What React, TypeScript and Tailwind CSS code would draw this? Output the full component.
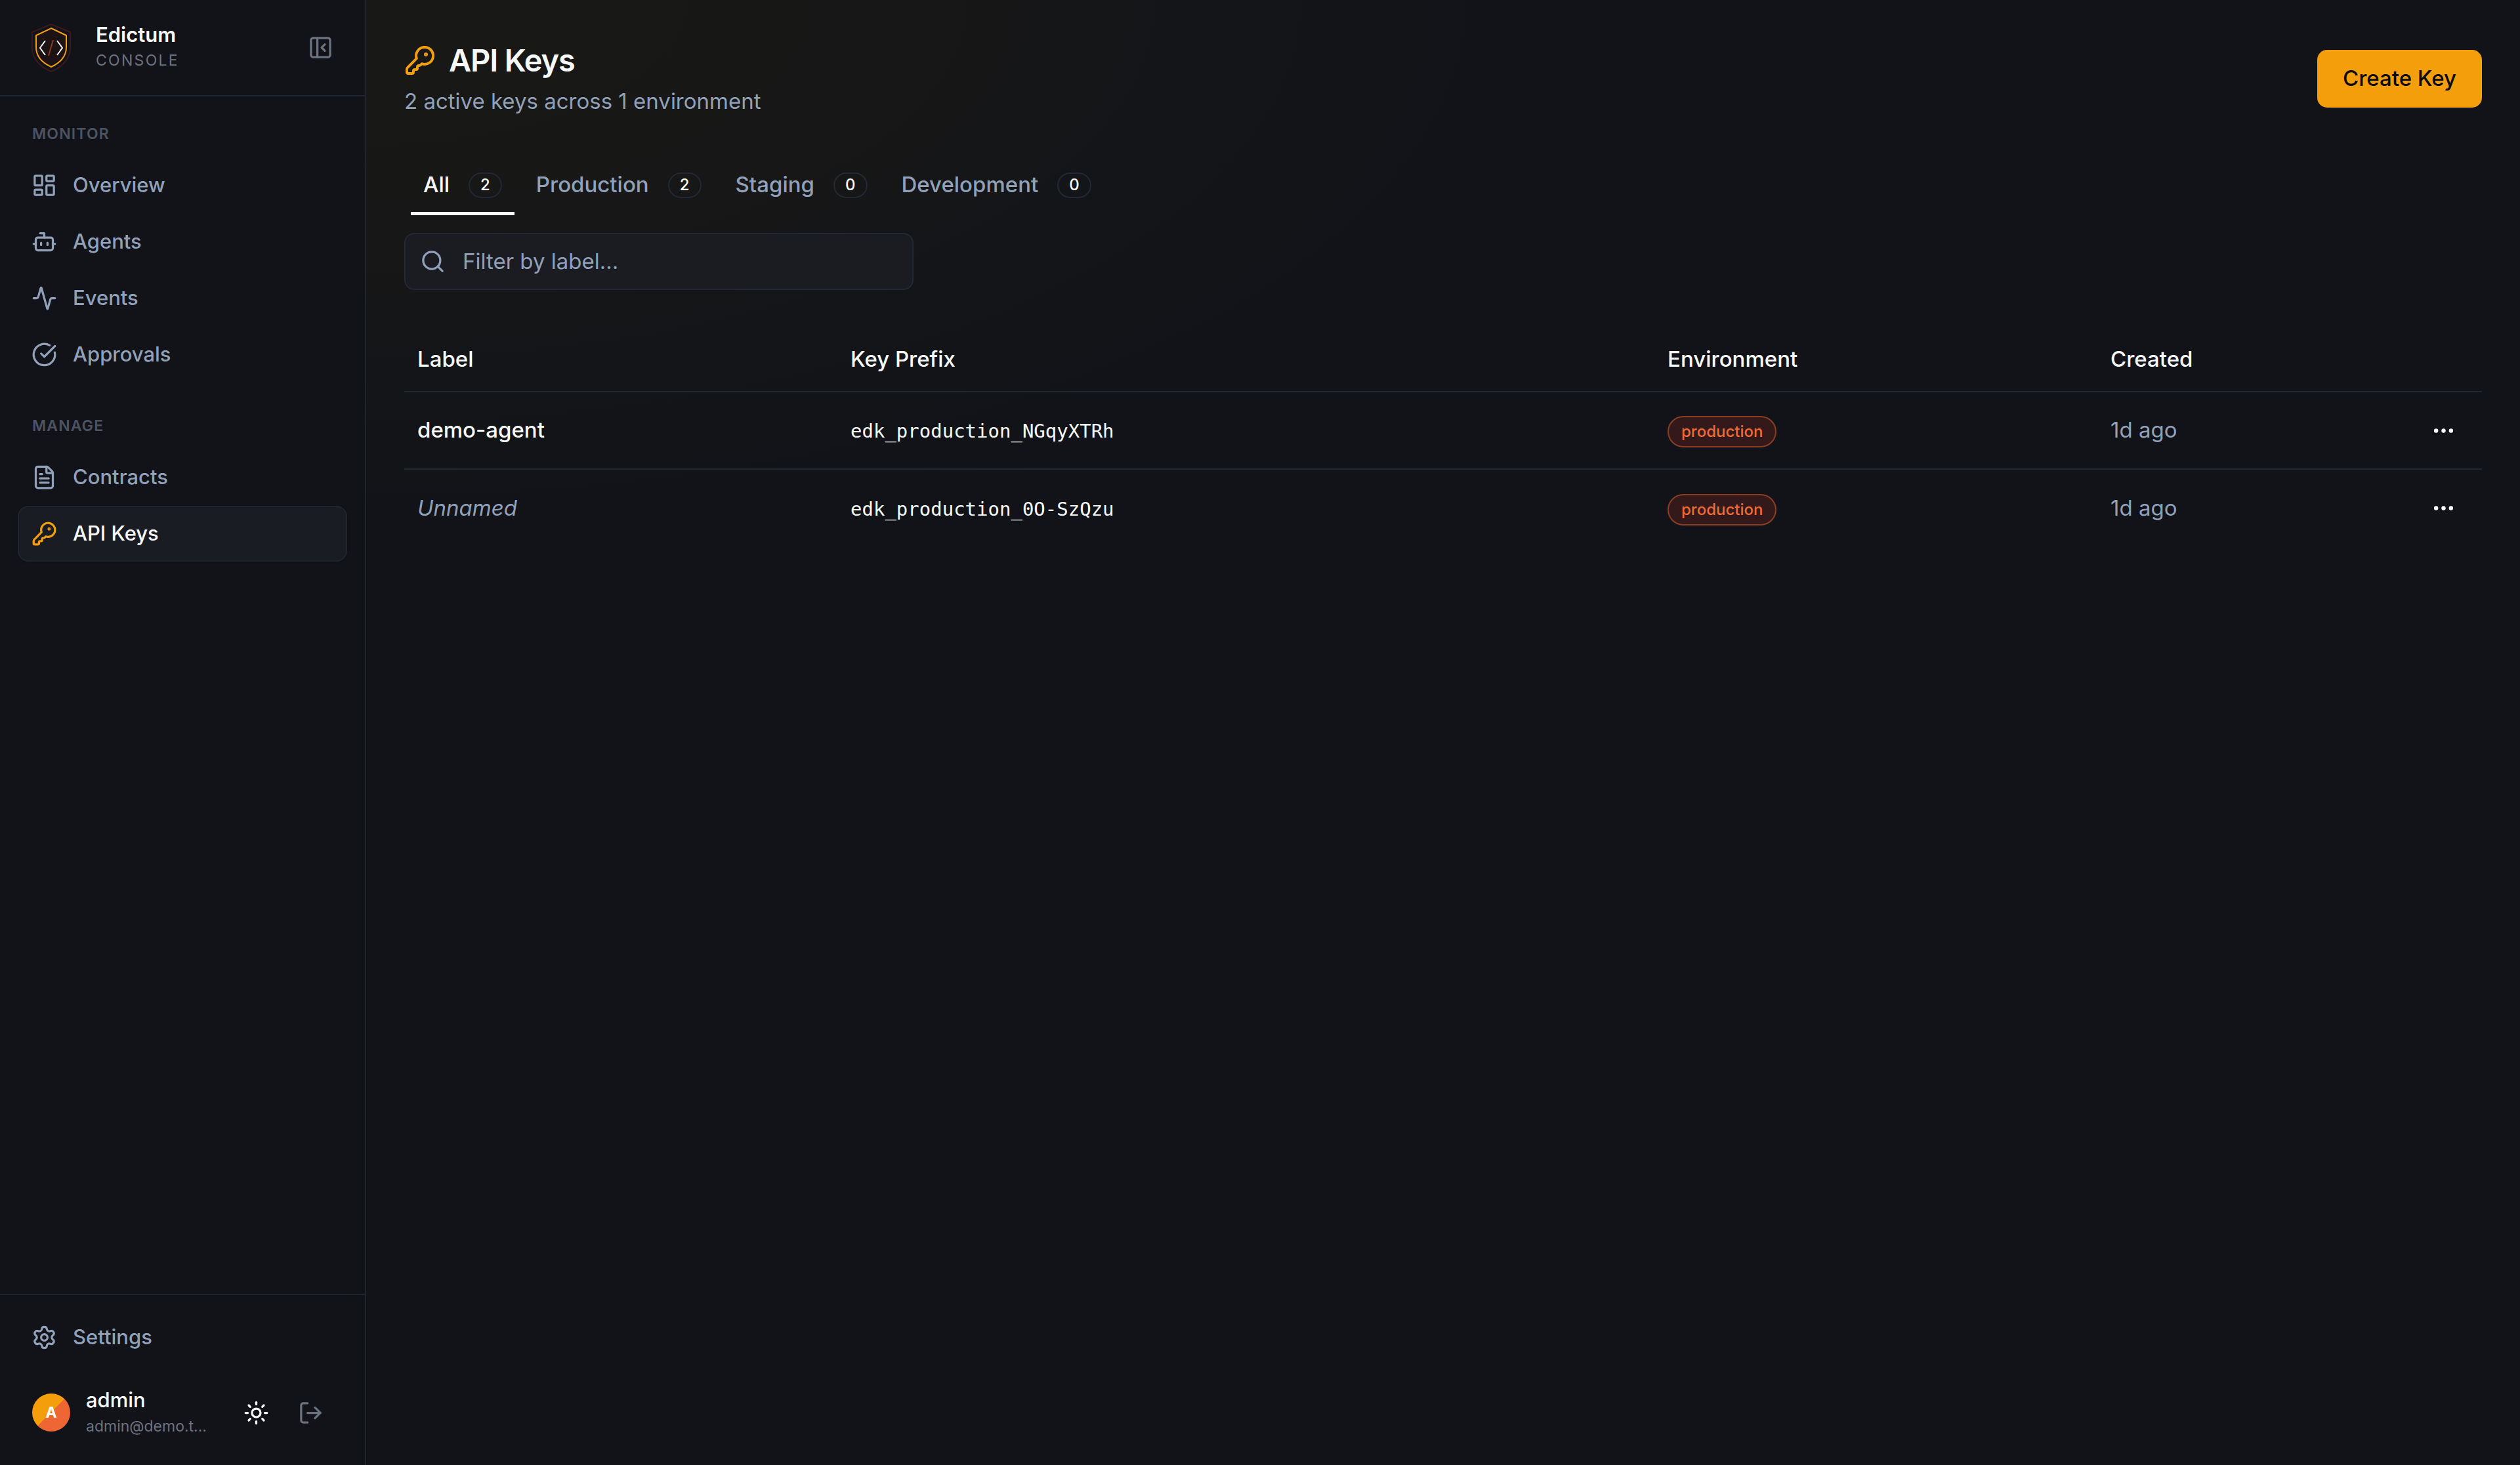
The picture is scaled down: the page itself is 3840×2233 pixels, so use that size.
import {
  Activity,
  Bot,
  CircleCheckBig,
  Ellipsis,
  FileText,
  KeyRound,
  LayoutDashboard,
  LogOut,
  PanelLeftClose,
  Search,
  Settings,
  Sun,
  type LucideIcon,
} from "lucide-react";

interface NavItem {
  label: string;
  icon: LucideIcon;
  active?: boolean;
}

interface ApiKey {
  label: string | null;
  prefix: string;
  environment: string;
  created: string;
}

const MONITOR: NavItem[] = [
  { label: "Overview", icon: LayoutDashboard },
  { label: "Agents", icon: Bot },
  { label: "Events", icon: Activity },
  { label: "Approvals", icon: CircleCheckBig },
];

const MANAGE: NavItem[] = [
  { label: "Contracts", icon: FileText },
  { label: "API Keys", icon: KeyRound, active: true },
];

const TABS = [
  { label: "All", count: 2 },
  { label: "Production", count: 2 },
  { label: "Staging", count: 0 },
  { label: "Development", count: 0 },
];

const KEYS: ApiKey[] = [
  {
    label: "demo-agent",
    prefix: "edk_production_NGqyXTRh",
    environment: "production",
    created: "1d ago",
  },
  {
    label: null,
    prefix: "edk_production_0O-SzQzu",
    environment: "production",
    created: "1d ago",
  },
];

function ShieldLogo() {
  return (
    <svg viewBox="0 0 60 74" fill="none" aria-hidden className="h-[74px] w-[60px] shrink-0">
      <path
        d="M30 1 59 13V38C59 54 45 67 30 73 15 67 1 54 1 38V13Z"
        stroke="#3a1a1c"
        strokeWidth="2"
      />
      <path
        d="M30 7 53 18V36C53 50 43 60 30 66 17 60 7 50 7 36V18Z"
        fill="#1d1315"
        stroke="#f59e0b"
        strokeWidth="2"
      />
      <path d="M21 26 13 37 21 48M39 26 47 37 39 48" stroke="#f8fafc" strokeWidth="2" />
      <path d="M33 25 26 49" stroke="#8a3a20" strokeWidth="2" />
    </svg>
  );
}

function NavLink({ label, icon: Icon, active = false }: NavItem) {
  return (
    <a
      href="#"
      className={`flex h-[85px] items-center gap-6 rounded-2xl border-2 px-[19px] text-[31px] font-medium ${
        active
          ? "border-[#20242e] bg-[#1a1c24] text-slate-50 shadow-sm"
          : "border-transparent text-slate-400"
      }`}
    >
      <Icon className={`size-[39px] shrink-0 ${active ? "text-[#f59e0b]" : ""}`} />
      {label}
    </a>
  );
}

function NavSection({ title, items }: { title: string; items: NavItem[] }) {
  return (
    <section>
      <h2 className="mb-[21px] px-[22px] text-[23px] leading-[30px] font-semibold tracking-wider text-[#4b5363] uppercase">
        {title}
      </h2>
      <div className="flex flex-col gap-px">
        {items.map((item) => (
          <NavLink key={item.label} {...item} />
        ))}
      </div>
    </section>
  );
}

function Sidebar() {
  return (
    <aside className="flex w-[558px] shrink-0 flex-col border-r-2 border-[#20242e] bg-[#121318]">
      <div className="flex h-[147px] items-center border-b-2 border-[#20242e] px-12">
        <ShieldLogo />
        <div className="ml-[38px] flex-1">
          <div className="text-[31px] leading-[38px] font-semibold text-slate-50">Edictum</div>
          <div className="text-[23px] leading-[40px] tracking-widest text-[#6b7280]">CONSOLE</div>
        </div>
        <button type="button" aria-label="Collapse sidebar" className="text-[#6b7280]">
          <PanelLeftClose className="size-[39px]" />
        </button>
      </div>

      <nav className="flex flex-1 flex-col gap-[51px] px-[27px] py-[42px]">
        <NavSection title="Monitor" items={MONITOR} />
        <NavSection title="Manage" items={MANAGE} />
      </nav>

      <div className="border-t-2 border-[#20242e] px-[27px] pt-[22px] pb-[40px]">
        <NavLink label="Settings" icon={Settings} />
        <div className="mt-8 flex items-center px-[22px]">
          <div className="flex size-[58px] shrink-0 items-center justify-center rounded-full bg-[linear-gradient(135deg,#f59e0b_50%,#ee6633_50%)] text-[23px] font-bold text-white">
            A
          </div>
          <div className="ml-6 w-[186px]">
            <div className="text-[31px] leading-[42px] font-medium text-slate-50">admin</div>
            <div className="text-[23px] leading-[38px] whitespace-nowrap text-[#6b7280]">
              admin@demo.t…
            </div>
          </div>
          <button type="button" aria-label="Toggle theme" className="ml-[54px] text-slate-50">
            <Sun className="size-[39px]" />
          </button>
          <button type="button" aria-label="Sign out" className="ml-11 text-[#6b7280]">
            <LogOut className="size-[39px]" />
          </button>
        </div>
      </div>
    </aside>
  );
}

function EnvTabs() {
  return (
    <div role="tablist" className="flex gap-[14px] px-[10px]">
      {TABS.map(({ label, count }, i) => (
        <button
          key={label}
          type="button"
          role="tab"
          aria-selected={i === 0}
          className={`flex h-[92px] items-center gap-[29px] border-b-[5px] px-[19px] pt-[5px] text-[33px] font-medium ${
            i === 0 ? "border-slate-50 text-slate-50" : "border-transparent text-slate-400"
          }`}
        >
          {label}
          <span className="flex h-[39px] min-w-12 items-center justify-center rounded-full border-2 border-[#242834] px-4 text-[24px] text-slate-50">
            {count}
          </span>
        </button>
      ))}
    </div>
  );
}

function KeysTable() {
  return (
    <table className="mt-[58px] w-full table-fixed text-left text-[33px]">
      <colgroup>
        <col className="w-[660px]" />
        <col />
        <col className="w-[675px]" />
        <col className="w-[420px]" />
        <col className="w-[166px]" />
      </colgroup>
      <thead>
        <tr className="h-[97px] border-b-2 border-[#242831] text-slate-50">
          <th className="px-5 font-medium">Label</th>
          <th className="px-5 font-medium">Key Prefix</th>
          <th className="px-5 font-medium">Environment</th>
          <th className="px-5 font-medium">Created</th>
          <th aria-label="Actions" />
        </tr>
      </thead>
      <tbody>
        {KEYS.map((key) => (
          <tr
            key={key.prefix}
            className="h-[118px] border-b-2 border-[#242831] last:border-0"
          >
            <td className="px-5 font-medium text-slate-50">
              {key.label ?? <span className="font-normal text-slate-400 italic">Unnamed</span>}
            </td>
            <td className="px-5 pt-1 font-['DejaVu_Sans_Mono',monospace] text-[29px] text-slate-50">
              {key.prefix}
            </td>
            <td className="px-5">
              <span className="inline-flex h-12 items-center rounded-full border-2 border-[#8a3f22] bg-[#33191a] px-[19px] text-[24px] font-medium text-[#f26a35]">
                {key.environment}
              </span>
            </td>
            <td className="px-5 text-slate-400">{key.created}</td>
            <td className="px-5">
              <button
                type="button"
                aria-label="Key actions"
                className="ml-auto flex size-[77px] items-center justify-center text-slate-50"
              >
                <Ellipsis className="size-[39px]" />
              </button>
            </td>
          </tr>
        ))}
      </tbody>
    </table>
  );
}

export default function App() {
  return (
    <div className="flex min-h-screen bg-[#121318] font-[Inter,sans-serif]">
      <Sidebar />
      <main className="min-w-0 flex-1 bg-[radial-gradient(ellipse_1900px_860px_at_0_0,#181816,#171717_45%,#141518_65%,#121318)] px-[58px] pt-[58px]">
        <header className="flex items-center justify-between">
          <div>
            <h1 className="flex items-center gap-5 text-[47px] leading-[68px] font-semibold tracking-tight text-slate-50">
              <KeyRound className="size-12 text-[#f59e0b]" />
              API Keys
            </h1>
            <p className="text-[33px] leading-[56px] text-slate-400">
              2 active keys across 1 environment
            </p>
          </div>
          <button
            type="button"
            className="h-[88px] rounded-[15px] bg-[#f59e0b] px-[39px] text-[33px] font-medium text-[#0a0a0a]"
          >
            Create Key
          </button>
        </header>

        <div className="mt-[54px]">
          <EnvTabs />
        </div>

        <label className="mt-[27px] flex h-[87px] w-[776px] items-center gap-[26px] rounded-[15px] border-2 border-[#242834] bg-[#1a1c22] px-[22px] text-slate-400">
          <Search className="size-[39px] shrink-0" />
          <input
            type="text"
            aria-label="Filter by label"
            placeholder="Filter by label..."
            className="min-w-0 flex-1 bg-transparent text-[33px] outline-none placeholder:text-slate-400"
          />
        </label>

        <KeysTable />
      </main>
    </div>
  );
}
